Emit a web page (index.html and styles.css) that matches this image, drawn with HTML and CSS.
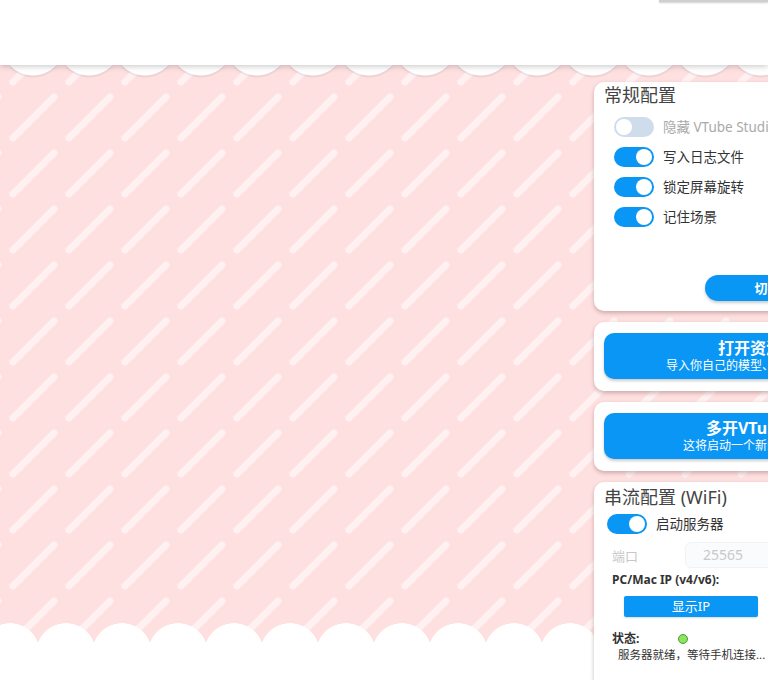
FILE: index.html
```html
<!DOCTYPE html>
<html lang="zh-CN">
<head>
<meta charset="utf-8">
<title>VTube Studio</title>
<link rel="stylesheet" href="styles.css">
</head>
<body>
<div class="app">
  <header class="topbar"><div class="topbar-tab"></div></header>
  <div class="scallop-top"></div>
  <main class="main">
    <section class="stage"><div class="scallop-bottom"></div></section>
    <aside class="sidebar">
      <div class="card card-general">
        <h2 class="card-title">常规配置</h2>
        <div class="toggle-list">
          <div class="toggle-row is-disabled"><span class="switch"></span><span class="toggle-label">隐藏 VTube Studio 标志</span></div>
          <div class="toggle-row"><span class="switch is-on"></span><span class="toggle-label">写入日志文件</span></div>
          <div class="toggle-row"><span class="switch is-on"></span><span class="toggle-label">锁定屏幕旋转</span></div>
          <div class="toggle-row"><span class="switch is-on"></span><span class="toggle-label">记住场景</span></div>
        </div>
        <div class="card-actions"><button class="pill-btn">切换语言 / Language</button></div>
      </div>
      <div class="card card-action">
        <button class="big-btn"><span class="big-btn-title">打开资源文件夹</span><span class="big-btn-sub">导入你自己的模型、道具、背景图等文件</span></button>
      </div>
      <div class="card card-action">
        <button class="big-btn"><span class="big-btn-title">多开VTube Studio</span><span class="big-btn-sub">这将启动一个新的VTube Studio。</span></button>
      </div>
      <div class="card card-stream">
        <h2 class="card-title">串流配置 (WiFi)</h2>
        <div class="toggle-row stream-toggle"><span class="switch is-on"></span><span class="toggle-label">启动服务器</span></div>
        <div class="port-row"><span class="port-label">端口</span><span class="port-input">25565</span></div>
        <div class="ip-label">PC/Mac IP (v4/v6):</div>
        <button class="ip-btn">显示IP</button>
        <div class="status-row"><span class="status-label">状态:</span><span class="status-dot"></span></div>
        <div class="status-text">服务器就绪，等待手机连接...</div>
      </div>
    </aside>
  </main>
</div>
</body>
</html>
```

FILE: styles.css
```css
* { box-sizing: border-box; }

html, body {
  margin: 0;
  padding: 0;
}

body {
  width: 768px;
  height: 680px;
  overflow: hidden;
  font-family: "Noto Sans", "Noto Sans CJK SC", sans-serif;
  color: #333;
  background-color: #ffe0e1;
  background-image: url("data:image/svg+xml,%3Csvg xmlns='http://www.w3.org/2000/svg' width='56' height='56'%3E%3Cg stroke='%23fff0f1' stroke-width='7' stroke-linecap='round'%3E%3Cpath d='M14 26L55 -15M14 82L55 41M-42 82L-1 41M70 26L111 -15'/%3E%3C/g%3E%3C/svg%3E");
  background-size: 56px 56px;
  background-position: -1px 0;
}

.app {
  height: 680px;
  display: flex;
  flex-direction: column;
}

.topbar {
  flex: none;
  height: 65px;
  background: #fff;
  box-shadow: 0 1px 6px rgba(0, 0, 0, 0.24);
  position: relative;
  z-index: 2;
  display: flex;
  justify-content: flex-end;
  align-items: flex-start;
}

.topbar-tab {
  width: 109px;
  height: 2px;
  background: #cfcfcf;
  box-shadow: 0 1px 2px rgba(0, 0, 0, 0.2);
}

.scallop-top {
  flex: none;
  height: 11px;
  position: relative;
  z-index: 1;
  background: radial-gradient(circle at 28px -21px, #fff 31px, rgba(255, 255, 255, 0) 32px) 5px 0 / 56px 11px repeat-x;
  filter: drop-shadow(0 1px 1px rgba(0, 0, 0, 0.12));
}

.main {
  flex: 1;
  display: flex;
  overflow: hidden;
}

.stage {
  flex: none;
  width: 594px;
  display: flex;
  flex-direction: column;
  justify-content: flex-end;
}

.scallop-bottom {
  height: 57px;
  background:
    radial-gradient(circle at 28px 30px, #fff 29.5px, rgba(255, 255, 255, 0) 30px) -18px 0 / 56px 60px repeat-x,
    linear-gradient(#fff, #fff) 0 30px / 100% 100% no-repeat;
}

.sidebar {
  flex: none;
  width: 360px;
  padding-top: 6px;
  display: flex;
  flex-direction: column;
  gap: 11px;
}

.card {
  flex: none;
  background: #fff;
  border-radius: 10px;
  box-shadow: 0 2px 4px rgba(60, 20, 20, 0.28);
}

.card-title {
  margin: 0;
  font-size: 18px;
  line-height: 24px;
  font-weight: 400;
  color: #444;
}

.card-general {
  height: 229px;
  padding: 1px 10px 10px;
  display: flex;
  flex-direction: column;
}

.toggle-list {
  margin-top: 10px;
  display: flex;
  flex-direction: column;
  gap: 10px;
  padding-left: 10px;
}

.toggle-row {
  height: 20px;
  display: flex;
  align-items: center;
  gap: 9px;
}

.toggle-label {
  font-size: 13.5px;
  line-height: 20px;
  color: #333;
  white-space: nowrap;
}

.is-disabled .toggle-label { color: #a9a9a9; }

.switch {
  flex: none;
  width: 40px;
  height: 20px;
  border-radius: 10px;
  background: #cfdcec;
  position: relative;
}

.switch::after {
  content: "";
  position: absolute;
  top: 2px;
  left: 2px;
  width: 16px;
  height: 16px;
  border-radius: 50%;
  background: #fff;
}

.switch.is-on { background: #0996f4; }
.switch.is-on::after { left: 22px; }

.card-actions {
  margin-top: auto;
  display: flex;
  justify-content: flex-end;
}

.pill-btn {
  width: 239px;
  height: 26px;
  border: 0;
  border-radius: 13px;
  background: #0996f4;
  color: #fff;
  font: 700 13px/26px "Noto Sans", "Noto Sans CJK SC", sans-serif;
  box-shadow: 0 2px 3px rgba(0, 0, 0, 0.2);
  padding: 0 12px 0 0;
  white-space: nowrap;
}

.card-action {
  height: 69px;
  padding: 11px 10px 12px;
}

.big-btn {
  width: 100%;
  height: 46px;
  border: 0;
  border-radius: 10px;
  background: #0996f4;
  color: #fff;
  display: flex;
  flex-direction: column;
  align-items: center;
  justify-content: center;
  padding: 0;
  box-shadow: 0 2px 3px rgba(0, 0, 0, 0.2);
  font-family: "Noto Sans", "Noto Sans CJK SC", sans-serif;
  white-space: nowrap;
}

.big-btn-title {
  font-size: 16px;
  line-height: 20px;
  font-weight: 700;
}

.big-btn-sub {
  font-size: 12px;
  line-height: 16px;
}

.card-stream {
  height: 220px;
  padding: 3px 10px 10px;
  display: flex;
  flex-direction: column;
  align-items: flex-start;
}

.stream-toggle {
  margin-top: 5px;
  padding-left: 3px;
}

.port-row {
  margin-top: 8px;
  padding-left: 8px;
  display: flex;
  align-items: center;
}

.port-label {
  width: 73px;
  font-size: 13px;
  color: #c8c8c8;
}

.port-input {
  width: 200px;
  height: 26px;
  border-radius: 6px;
  border: 1px solid #f0f2f6;
  background: #fafbfd;
  padding-left: 17px;
  font-size: 14px;
  line-height: 24px;
  color: #c9c9c9;
}

.ip-label {
  margin-top: 4px;
  padding-left: 8px;
  font-size: 12px;
  line-height: 16px;
  font-weight: 700;
  color: #333;
}

.ip-btn {
  margin: 8px 0 0 20px;
  width: 134px;
  height: 21px;
  border: 0;
  border-radius: 2px;
  background: #0996f4;
  color: #fff;
  font: 400 13px/21px "Noto Sans", "Noto Sans CJK SC", sans-serif;
  padding: 0;
  box-shadow: 0 1px 2px rgba(0, 0, 0, 0.15);
}

.status-row {
  margin-top: 14px;
  padding-left: 8px;
  display: flex;
  align-items: center;
  height: 16px;
}

.status-label {
  width: 66px;
  font-size: 12px;
  line-height: 16px;
  font-weight: 700;
  color: #333;
}

.status-dot {
  width: 10px;
  height: 10px;
  border-radius: 50%;
  background: #8be45a;
  border: 1px solid #4c9a3a;
}

.status-text {
  padding-left: 14px;
  font-size: 11.5px;
  line-height: 16px;
  color: #333;
  white-space: nowrap;
}
```
